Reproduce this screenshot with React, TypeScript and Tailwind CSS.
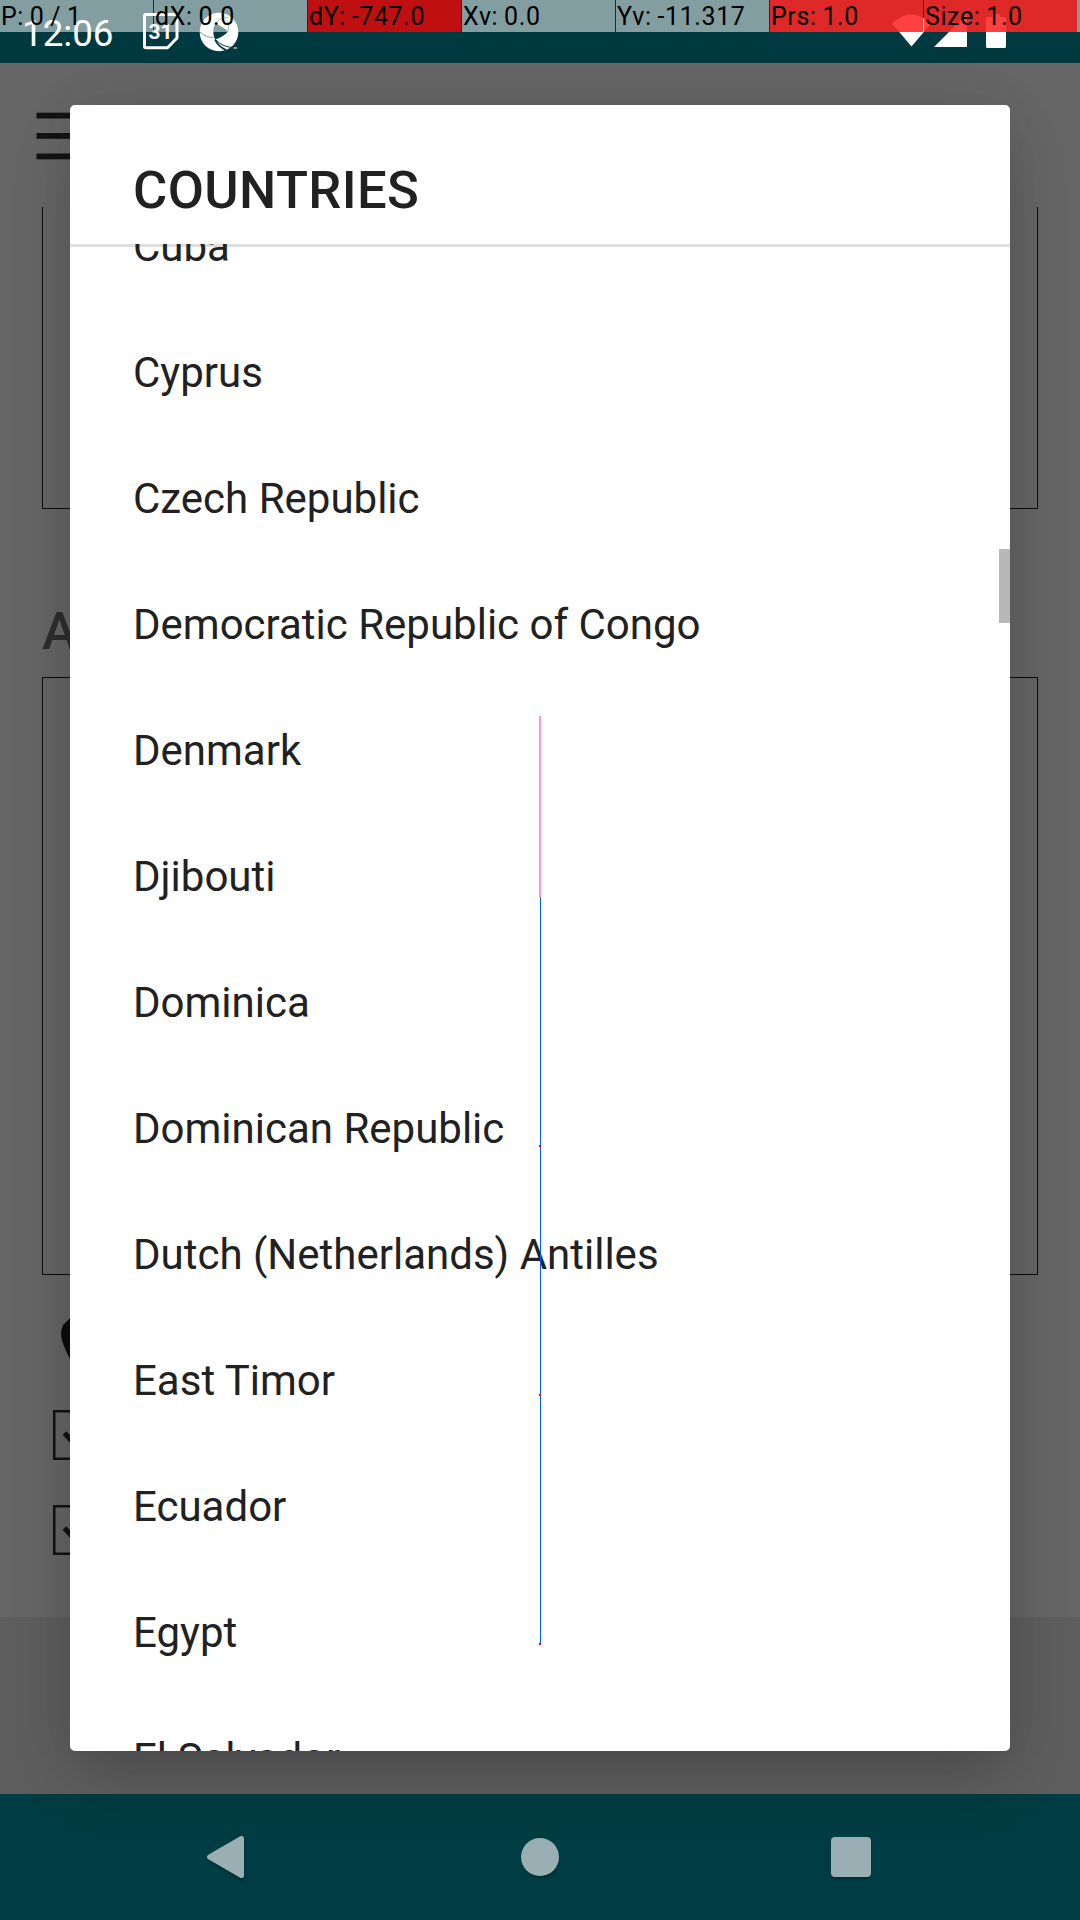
const countries = [
  'Cuba',
  'Cyprus',
  'Czech Republic',
  'Democratic Republic of Congo',
  'Denmark',
  'Djibouti',
  'Dominica',
  'Dominican Republic',
  'Dutch (Netherlands) Antilles',
  'East Timor',
  'Ecuador',
  'Egypt',
  'El Salvador',
];

const readouts = [
  { label: 'P: 0 / 1', tone: 'bg-white/51' },
  { label: 'dX: 0.0', tone: 'bg-white/51' },
  { label: 'dY: -747.0', tone: 'bg-[#ff0000]/75' },
  { label: 'Xv: 0.0', tone: 'bg-white/51' },
  { label: 'Yv: -11.317', tone: 'bg-white/51' },
  { label: 'Prs: 1.0', tone: 'bg-[linear-gradient(#ff0000bf,#ff0000bf),linear-gradient(#ffffff82,#ffffff82)]' },
  { label: 'Size: 1.0', tone: 'bg-[linear-gradient(#ff0000bf,#ff0000bf),linear-gradient(#ffffff82,#ffffff82)]' },
];

function CalendarIcon() {
  return (
    <svg className="ml-[30px] h-[38px] w-[38px]" viewBox="0 0 38 38">
      <path d="M4 2.5h29.500q1.500 0 1.500 1.500v22L25.500 35.800H4q-1.500 0-1.500-1.500V4q0-1.500 1.500-1.500z" fill="none" stroke="#fff" strokeWidth="3" strokeLinejoin="round" />
      <text x="18.500" y="26.500" textAnchor="middle" fontSize="21" fontWeight="700" fill="#fff" className="font-[Roboto]">31</text>
    </svg>
  );
}

function ApertureIcon() {
  return (
    <svg className="ml-[19px] h-[40px] w-[40px]" viewBox="0 0 40 40">
      <circle cx="20" cy="20" r="19.300" fill="#fff" />
      <path d="M16 12Q22 13 29 19.500Q25 24.500 16 27.500Q12.500 19 16 12z" fill="#003a40" />
      <g fill="none" stroke="#003a40" strokeWidth="1">
        <path d="M16 12Q20 6 29 5.500" strokeWidth=".7" />
        <path d="M29 19.500Q31 14 28.500 9" strokeWidth=".7" />
        <path d="M16 27.500Q19 34.500 27 38" strokeWidth="1.800" />
        <path d="M17 28Q24 35.500 35 35.500" />
        <path d="M15 25Q9 27 1 20" strokeWidth=".5" />
      </g>
      <path d="M34.500 36h3.500" stroke="#fff" />
    </svg>
  );
}

function StatusBar() {
  return (
    <div className="relative h-[63px] shrink-0 bg-[#003a40]">
      <div className="flex h-full items-start justify-between pl-[21px]">
        <div className="flex pt-[12px]">
          <span className="w-[91px] whitespace-nowrap pl-px pt-[3px] text-[36.750px] leading-[38px] text-white">12:06</span>
          <CalendarIcon />
          <ApertureIcon />
        </div>
        <svg className="mr-[72px] mt-[12px] h-[38px] w-[118px]" viewBox="890 12 118 38" fill="#fff">
          <path d="M892 23.500Q911.500 5.500 931 23.500L911.500 46.500z" />
          <path d="M934 47L967 14v33z" />
          <path d="M992 14h8v3h4.500q1.500 0 1.500 1.500v28q0 1.500-1.500 1.500h-17q-1.500 0-1.500-1.500v-28q0-1.500 1.500-1.500h4.500z" />
        </svg>
      </div>
      <div className="absolute inset-x-0 top-0 flex h-8 gap-px">
        {readouts.map((r) => (
          <div key={r.label} className={`h-8 w-[153px] shrink-0 whitespace-nowrap pl-px text-[25px] leading-[33px] tracking-[0.600px] [word-spacing:-1px] text-black ${r.tone}`}>
            {r.label}
          </div>
        ))}
        <div className="-ml-px flex-1 bg-white/51" />
      </div>
    </div>
  );
}

function CheckRow() {
  return (
    <svg className="h-[50px] w-[50px]" viewBox="0 0 50 50" fill="none" stroke="#121212">
      <rect x="1.250" y="1.250" width="47.500" height="47.500" strokeWidth="2.500" />
      <path d="M11.500 23l10 11 17-22" strokeWidth="5" />
    </svg>
  );
}

function FormPage() {
  return (
    <div className="flex min-h-0 flex-1 flex-col bg-[#666666]">
      <div className="flex h-[144px] shrink-0 flex-col pl-9 pt-[49px]">
        <svg className="h-[50px] w-[60px]" viewBox="0 0 60 50" fill="#131313">
          <rect x=".500" y=".700" width="59" height="5.800" />
          <rect x=".500" y="21" width="59" height="5.800" />
          <rect x=".500" y="41.500" width="59" height="5.800" />
        </svg>
      </div>
      <div className="mx-[42px] h-[302px] shrink-0 border border-t-0 border-[#0c0c0c]" />
      <div className="h-[168px] shrink-0 pl-[42px] pt-[90px] text-[52.500px] font-medium leading-[64px] text-[#2e2e2e]">Address</div>
      <div className="mx-[42px] h-[598px] shrink-0 border border-[#0c0c0c]" />
      <div className="flex h-[342px] shrink-0 flex-col pl-[53px]">
        <svg className="ml-2 mt-[41px] h-[60px] w-[44px]" viewBox="0 0 44 60" fill="#0c0c0c">
          <path d="M22 -6Q14 -4 9 2L2 9Q0 13 0 18Q0 26 9 43L22 60L35 43Q44 26 44 18Q44 13 42 9L35 2Q30 -4 22 -6z" />
        </svg>
        <div className="mt-[34px] flex flex-col gap-[45px]">
          <CheckRow />
          <CheckRow />
        </div>
      </div>
      <div className="flex-1 bg-[#5e5e5e]" />
    </div>
  );
}

function NavBar() {
  return (
    <div className="flex h-[126px] shrink-0 items-center bg-[#003c43] pl-[206px]">
      <svg className="h-[46px] w-[40px] drop-shadow-[0_2px_1px_rgba(0,0,0,0.25)]" viewBox="0 0 40 46">
        <path d="M3.500 23L35.500 4.500v37z" fill="#99afb3" stroke="#99afb3" strokeWidth="5" strokeLinejoin="round" />
      </svg>
      <div className="ml-[275px] h-[38px] w-[38px] rounded-full bg-[#99afb3] shadow-[0_2px_2px_rgba(0,0,0,0.2)]" />
      <div className="ml-[272px] h-[40px] w-[40px] rounded-[4px] bg-[#99afb3] shadow-[0_2px_2px_rgba(0,0,0,0.25)]" />
    </div>
  );
}

function CountryDialog() {
  return (
    <div className="absolute left-[70px] top-[105px] flex h-[1646px] w-[940px] flex-col overflow-hidden rounded-[5px] bg-white text-[#212121]">
      <h1 className="h-[139px] shrink-0 pl-[63px] pt-[54px] text-[52.500px] font-medium leading-[62px] tracking-[0.400px]">COUNTRIES</h1>
      <div className="relative min-h-0 flex-1 overflow-hidden">
        <div className="h-[3px] bg-[#dedede]" />
        <ul className="relative -mt-[64px]">
          {countries.map((name) => (
            <li key={name} className="flex h-[126px] items-center pl-[63px] text-[42px]">
              {name}
            </li>
          ))}
        </ul>
        <div className="absolute right-0 top-[305px] h-[74px] w-[11px] bg-[#b8b8b8]" />
      </div>
    </div>
  );
}

function PointerTrail() {
  return (
    <svg className="absolute left-[539px] top-[716px] h-[930px] w-[2px]" viewBox="0 0 2 930" shapeRendering="crispEdges">
      <rect x="0" y="0" width="2" height="181" fill="#ff99bb" />
      <rect x="1" y="181" width="1" height="747" fill="#0060ff" />
      <rect x="0" y="429" width="2" height="2" fill="#ff0000" />
      <rect x="0" y="678" width="2" height="2" fill="#ff0000" />
      <rect x="0" y="927" width="2" height="2" fill="#ff0000" />
    </svg>
  );
}

export default function App() {
  return (
    <div className="relative flex h-[1920px] w-[1080px] flex-col overflow-hidden font-[Roboto,sans-serif]">
      <StatusBar />
      <FormPage />
      <NavBar />
      <div className="absolute inset-x-0 bottom-0 top-[63px] overflow-hidden">
        <div className="absolute left-[70px] top-[42px] h-[1646px] w-[940px] rounded-[5px] shadow-[0_28px_64px_-8px_rgba(0,0,0,0.2),0_0_48px_rgba(0,0,0,0.08)]" />
      </div>
      <CountryDialog />
      <PointerTrail />
    </div>
  );
}
